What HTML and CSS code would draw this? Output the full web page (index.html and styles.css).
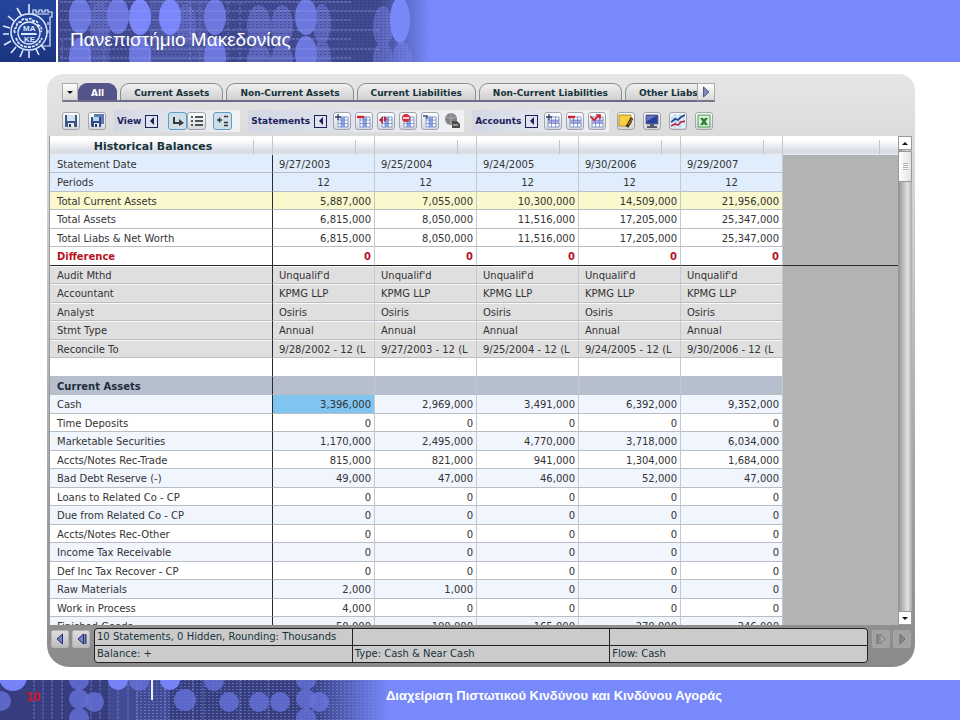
FILE: index.html
```html
<!DOCTYPE html>
<html lang="el">
<head>
    <meta charset="UTF-8">
    <meta name="viewport" content="width=device-width, initial-scale=1.0">
    <title>Πανεπιστήμιο Μακεδονίας</title>
    <link rel="stylesheet" href="styles.css">
</head>
<body>
    <!-- Shared icon shapes -->
    <svg class="sprite" width="0" height="0" aria-hidden="true">
        <symbol id="disk" viewBox="0 0 14 14">
            <path d="M1 1h12v12H2L1 12z" fill="#3c5488"/>
            <path d="M3 1h8v6H3z" fill="#cfe2f2"/>
            <path d="M4 9h6v4H4z" fill="#e8eef4"/>
            <path d="M5 10h2v3H5z" fill="#26385f"/>
        </symbol>
        <symbol id="disks" viewBox="0 0 14 14">
            <path d="M4 0h10v10H4z" fill="#5f7db4"/>
            <path d="M1 3h10v10H2L1 12z" fill="#304a80"/>
            <path d="M3 3h6v4H3z" fill="#b9d4ec"/>
            <path d="M4 9h5v4H4z" fill="#e8eef4"/>
            <path d="M5 10h2v3H5z" fill="#26385f"/>
        </symbol>
        <symbol id="grid" viewBox="0 0 14 14">
            <path d="M3 3h10v10H3z" fill="#fff" stroke="#8398cc"/>
            <path d="M6 3h3v10H6z" fill="#86a6ea"/>
            <path d="M3 6h10M3 9.500h10M6 3v10M9.500 3v10" stroke="#6f86c4" stroke-width=".8"/>
        </symbol>
        <symbol id="rows" viewBox="0 0 14 14">
            <path d="M2 3h11v10H2z" fill="#fff" stroke="#8398cc"/>
            <path d="M2 6h11v3H2z" fill="#a9a4e2"/>
            <path d="M2 6h11M2 9.500h11M5.500 3v10M9.500 3v10" stroke="#6f86c4" stroke-width=".8"/>
        </symbol>
        <symbol id="left" viewBox="0 0 14 14">
            <path d="M9.500 2v10L4 7z" fill="#7482c8" stroke="#262c66"/>
        </symbol>
        <symbol id="right" viewBox="0 0 14 14">
            <path d="M4.500 2v10L10 7z" fill="currentColor" stroke="#555a78"/>
        </symbol>
    </svg>

    <header class="banner">
        <svg class="banner-art" width="440" height="62" aria-hidden="true">
            <defs>
                <linearGradient id="fade-top">
                    <stop offset="0" stop-color="#788afb" stop-opacity="0"/>
                    <stop offset="1" stop-color="#788afb"/>
                </linearGradient>
                <pattern id="mesh" width="4" height="3" patternUnits="userSpaceOnUse">
                    <path d="M0 0h2v1H0z" fill="#2b3268" fill-opacity=".45"/>
                </pattern>
            </defs>
            <rect width="440" height="62" fill="#414a91"/>
            <g fill="#5e67bd">
                <rect x="90" width="20" height="62" opacity=".6"/>
                <rect x="150" width="58" height="62" opacity=".5"/>
                <ellipse cx="100" cy="22" rx="10" ry="20"/>
                <ellipse cx="186" cy="24" rx="10" ry="20"/>
                <ellipse cx="259" cy="26" rx="12" ry="21"/>
                <ellipse cx="282" cy="26" rx="11" ry="21"/>
                <ellipse cx="259" cy="60" rx="12" ry="16"/>
                <ellipse cx="282" cy="60" rx="11" ry="16"/>
                <ellipse cx="322" cy="24" rx="9" ry="20"/>
                <ellipse cx="322" cy="58" rx="9" ry="18"/>
                <ellipse cx="383" cy="27" rx="10" ry="21"/>
                <ellipse cx="383" cy="60" rx="10" ry="18"/>
                <ellipse cx="402" cy="60" rx="10" ry="18"/>
            </g>
            <rect x="58" width="382" height="62" fill="url(#mesh)"/>
            <g fill="#6d78de">
                <ellipse cx="80" cy="16" rx="11" ry="18"/>
                <ellipse cx="80" cy="58" rx="11" ry="20"/>
                <ellipse cx="118" cy="16" rx="11" ry="18"/>
                <ellipse cx="140" cy="56" rx="11" ry="20"/>
                <ellipse cx="215" cy="17" rx="11" ry="18"/>
                <ellipse cx="215" cy="58" rx="11" ry="20"/>
                <ellipse cx="306" cy="17" rx="11" ry="18"/>
                <ellipse cx="306" cy="54" rx="11" ry="18"/>
            </g>
            <g fill="#7b86fa">
                <ellipse cx="140" cy="17" rx="11" ry="18"/>
                <ellipse cx="170" cy="17" rx="11" ry="18"/>
            </g>
            <path d="M60 2h292M60 11h320M60 20h292M60 30h320M60 39h292M60 49h320M60 58h292" stroke="#98a2ee" stroke-opacity=".65" stroke-dasharray="3 1"/>
            <path d="M62 40v22M90 40v22M104 40v22M150 40v22M190 2v60M200 2v60M228 2v60M240 2v60" stroke="#98a2ee" stroke-opacity=".5" stroke-dasharray="3 2"/>
            <rect x="380" width="50" height="62" fill="url(#fade-top)"/>
            <rect x="429" width="11" height="62" fill="#788afb"/>
            <ellipse cx="400" cy="20" rx="10" ry="23" fill="#7888f8"/>
        </svg>
        <div class="crest">
            <svg width="56" height="62" viewBox="0 0 56 62" fill="none" stroke="#dfe9fb" role="img" aria-label="ΜΑΚΕ">
                <path d="M33 16v-6h3v2h3v-2h3v2h3v-2h3v2h4v5h-2v29h-8M33 14h16M48 22v3M48 30v3" stroke-width="1.200"/>
                <path d="M29 14V4M21 15l-4-7M14 21l-6-5M10 28l-7-2M9 34H3M11 41l-7 4M16 47l-5 6M23 50l-3 7M29 51v7M36 49l3 6M41 45l4 5" stroke-width="1.600"/>
                <circle cx="29" cy="32" r="18" fill="#24439b" stroke-width="1.500"/>
                <circle cx="29" cy="33" r="11" stroke-width="1.300"/>
                <path d="M15 33q-2-4 2-6q-1-5 4-5q2-5 6-2q4-3 6 1q5-1 5 4q5 2 3 7M16 38q3 9 12 9q10 0 14-9" stroke-width="1.800" stroke-dasharray="3 1"/>
                <path d="M21 33h15l1 2H21z" fill="#dfe9fb" stroke="none"/>
                <text x="23" y="31" class="crest-text">ΜΑ</text>
                <text x="24" y="42" class="crest-text">ΚΕ</text>
            </svg>
        </div>
        <h1 class="banner-title">Πανεπιστήμιο Μακεδονίας</h1>
    </header>

    <main class="panel">
        <nav class="tab-strip">
            <button class="strip-btn" aria-label="Tab list"><span class="caret-down"></span></button>
            <div class="tabs">
                <button class="tab tab-active">All</button>
                <button class="tab">Current Assets</button>
                <button class="tab">Non-Current Assets</button>
                <button class="tab">Current Liabilities</button>
                <button class="tab">Non-Current Liabilities</button>
                <button class="tab">Other Liabs</button>
            </div>
            <button class="strip-btn strip-next" aria-label="Next tabs"><svg width="14" height="14"><use href="#right"/></svg></button>
        </nav>

        <div class="toolbar">
            <button class="tool" aria-label="Save"><svg width="14" height="14"><use href="#disk"/></svg></button>
            <button class="tool" aria-label="Save all"><svg width="14" height="14"><use href="#disks"/></svg></button>
            <div class="group group-view">
                <span class="group-name">View</span>
                <button class="fold" aria-label="Collapse view"><span class="caret-left"></span></button>
                <div class="toggles">
                    <button class="tool tool-on" aria-label="Tree"><svg width="14" height="14"><path d="M3 3v6h6" fill="none" stroke="#3a3a3a" stroke-width="2"/><path d="M8 5l5 4-5 3z" fill="#3a3a3a"/></svg></button>
                    <button class="tool" aria-label="List"><svg width="14" height="14"><path d="M1 3h2M1 7h2M1 11h2M5 3h8M5 7h8M5 11h8" stroke="#222" stroke-width="1.600"/></svg></button>
                </div>
                <button class="tool tool-on" aria-label="Expand rows"><svg width="14" height="14"><path d="M1 6h5M3.500 3.500v5M8 2.500h4M8 8.500h4M8 11.500h4" stroke="#333" stroke-width="1.400"/></svg></button>
            </div>
            <div class="group group-wide">
                <span class="group-name">Statements</span>
                <button class="fold" aria-label="Collapse statements"><span class="caret-left"></span></button>
                <button class="tool" aria-label="Add statement"><svg width="14" height="14"><use href="#grid"/><path d="M0 3h6M3 0v6" stroke="#333f66" stroke-width="1.300"/></svg></button>
                <button class="tool" aria-label="Remove statement"><svg width="14" height="14"><use href="#grid"/><path d="M0 3h7" stroke="#d3202c" stroke-width="2.400"/></svg></button>
                <button class="tool" aria-label="Move statement"><svg width="14" height="14"><use href="#grid"/><path d="M0 6l4-4v8zM5 2l3 3-3 3z" fill="#c4203a"/></svg></button>
                <button class="tool" aria-label="Hide statement"><svg width="14" height="14"><use href="#grid"/><circle cx="5" cy="4" r="4" fill="#d8303a"/><path d="M2 4h6" stroke="#fff" stroke-width="1.600"/></svg></button>
                <button class="tool" aria-label="Statement list"><svg width="14" height="14"><use href="#grid"/><path d="M0 2h4v3" fill="none" stroke="#334a80" stroke-width="1.300"/></svg></button>
                <button class="tool tool-off" aria-label="Publish"><svg width="16" height="16"><circle cx="7" cy="6" r="6" fill="#858585"/><path d="M2 4q5 3 10 0M7 0v12" stroke="#aaa" fill="none"/><path d="M8 8h5l3 3v4H8z" fill="#4c4c4c"/><path d="M9 12h5" stroke="#ddd"/></svg></button>
            </div>
            <div class="group group-wide">
                <span class="group-name">Accounts</span>
                <button class="fold" aria-label="Collapse accounts"><span class="caret-left"></span></button>
                <button class="tool" aria-label="Add account"><svg width="14" height="14"><use href="#rows"/><path d="M0 3h6M3 0v6" stroke="#333f66" stroke-width="1.300"/></svg></button>
                <button class="tool" aria-label="Remove account"><svg width="14" height="14"><use href="#rows"/><path d="M0 3h7" stroke="#d3202c" stroke-width="2.400"/></svg></button>
                <button class="tool" aria-label="Check account"><svg width="14" height="14"><use href="#rows"/><path d="M0 2l4 4 6-5M6 1h4v4" fill="none" stroke="#cc2030" stroke-width="1.700"/></svg></button>
            </div>
            <button class="tool" aria-label="Notes"><svg width="16" height="14"><path d="M1 1h12v9l-3 2H1z" fill="#f8cf42" stroke="#b98d20"/><path d="M14 4l-5 9" stroke="#3b2c12" stroke-width="3"/><path d="M14 5l-4 6" stroke="#d78b24"/></svg></button>
            <button class="tool" aria-label="Screen"><svg width="14" height="14"><path d="M1 1h12v9H1z" fill="#2c3f9c" stroke="#6a6f86"/><path d="M2 2h9L2 7z" fill="#6277cc"/><path d="M5 10h4v2h3v2H2v-2h3z" fill="#5a5d6d"/></svg></button>
            <button class="tool" aria-label="Charts"><svg width="14" height="14"><path d="M0 0h14v14H0z" fill="#e0effa"/><path d="M0 4h14M0 8h14M4 0v14M9 0v14" stroke="#a8cbe4"/><path d="M0 8l4-3 3 1 3-3 4-2" fill="none" stroke="#21438a" stroke-width="1.700"/><path d="M0 12l4-2 3 1 3-3 4-1" fill="none" stroke="#c32a44" stroke-width="1.700"/></svg></button>
            <button class="tool" aria-label="Export to Excel"><svg width="14" height="14"><path d="M1 1h12v12H1z" fill="#d8efd5" stroke="#4a9a4e"/><path d="M3 4h3l5 7H8zM8 4h3l-5 7H3z" fill="#2f7c3c"/></svg></button>
        </div>

        <div class="sheet">
            <div class="sheet-view">
                <table class="balances">
                    <colgroup>
                        <col class="col-name"><col class="col-year"><col class="col-year"><col class="col-year"><col class="col-year"><col class="col-year"><col>
                    </colgroup>
                    <thead>
                        <tr><th>Historical Balances</th><th></th><th></th><th></th><th></th><th></th><th></th></tr>
                    </thead>
                    <tbody>
                        <tr class="blue left"><th>Statement Date</th><td>9/27/2003</td><td>9/25/2004</td><td>9/24/2005</td><td>9/30/2006</td><td>9/29/2007</td><td></td></tr>
                        <tr class="blue center"><th>Periods</th><td>12</td><td>12</td><td>12</td><td>12</td><td>12</td><td></td></tr>
                        <tr class="yellow"><th>Total Current Assets</th><td>5,887,000</td><td>7,055,000</td><td>10,300,000</td><td>14,509,000</td><td>21,956,000</td><td></td></tr>
                        <tr><th>Total Assets</th><td>6,815,000</td><td>8,050,000</td><td>11,516,000</td><td>17,205,000</td><td>25,347,000</td><td></td></tr>
                        <tr><th>Total Liabs &amp; Net Worth</th><td>6,815,000</td><td>8,050,000</td><td>11,516,000</td><td>17,205,000</td><td>25,347,000</td><td></td></tr>
                        <tr class="difference"><th>Difference</th><td>0</td><td>0</td><td>0</td><td>0</td><td>0</td><td></td></tr>
                        <tr class="gray left"><th>Audit Mthd</th><td>Unqualif'd</td><td>Unqualif'd</td><td>Unqualif'd</td><td>Unqualif'd</td><td>Unqualif'd</td><td></td></tr>
                        <tr class="gray left"><th>Accountant</th><td>KPMG LLP</td><td>KPMG LLP</td><td>KPMG LLP</td><td>KPMG LLP</td><td>KPMG LLP</td><td></td></tr>
                        <tr class="gray left"><th>Analyst</th><td>Osiris</td><td>Osiris</td><td>Osiris</td><td>Osiris</td><td>Osiris</td><td></td></tr>
                        <tr class="gray left"><th>Stmt Type</th><td>Annual</td><td>Annual</td><td>Annual</td><td>Annual</td><td>Annual</td><td></td></tr>
                        <tr class="gray left"><th>Reconcile To</th><td>9/28/2002 - 12 (L</td><td>9/27/2003 - 12 (L</td><td>9/25/2004 - 12 (L</td><td>9/24/2005 - 12 (L</td><td>9/30/2006 - 12 (L</td><td></td></tr>
                        <tr><th></th><td></td><td></td><td></td><td></td><td></td><td></td></tr>
                        <tr class="section"><th>Current Assets</th><td></td><td></td><td></td><td></td><td></td><td></td></tr>
                        <tr class="pale"><th>Cash</th><td class="selected">3,396,000</td><td>2,969,000</td><td>3,491,000</td><td>6,392,000</td><td>9,352,000</td><td></td></tr>
                        <tr><th>Time Deposits</th><td>0</td><td>0</td><td>0</td><td>0</td><td>0</td><td></td></tr>
                        <tr class="pale"><th>Marketable Securities</th><td>1,170,000</td><td>2,495,000</td><td>4,770,000</td><td>3,718,000</td><td>6,034,000</td><td></td></tr>
                        <tr><th>Accts/Notes Rec-Trade</th><td>815,000</td><td>821,000</td><td>941,000</td><td>1,304,000</td><td>1,684,000</td><td></td></tr>
                        <tr class="pale"><th>Bad Debt Reserve (-)</th><td>49,000</td><td>47,000</td><td>46,000</td><td>52,000</td><td>47,000</td><td></td></tr>
                        <tr><th>Loans to Related Co - CP</th><td>0</td><td>0</td><td>0</td><td>0</td><td>0</td><td></td></tr>
                        <tr class="pale"><th>Due from Related Co - CP</th><td>0</td><td>0</td><td>0</td><td>0</td><td>0</td><td></td></tr>
                        <tr><th>Accts/Notes Rec-Other</th><td>0</td><td>0</td><td>0</td><td>0</td><td>0</td><td></td></tr>
                        <tr class="pale"><th>Income Tax Receivable</th><td>0</td><td>0</td><td>0</td><td>0</td><td>0</td><td></td></tr>
                        <tr><th>Def Inc Tax Recover - CP</th><td>0</td><td>0</td><td>0</td><td>0</td><td>0</td><td></td></tr>
                        <tr class="pale"><th>Raw Materials</th><td>2,000</td><td>1,000</td><td>0</td><td>0</td><td>0</td><td></td></tr>
                        <tr><th>Work in Process</th><td>4,000</td><td>0</td><td>0</td><td>0</td><td>0</td><td></td></tr>
                        <tr class="pale"><th>Finished Goods</th><td>50,000</td><td>100,000</td><td>165,000</td><td>270,000</td><td>346,000</td><td></td></tr>
                    </tbody>
                </table>
            </div>
            <div class="scrollbar">
                <button class="scroll-btn" aria-label="Scroll up"><span class="caret-up"></span></button>
                <div class="scroll-thumb"><span class="grip"></span></div>
                <button class="scroll-btn scroll-end" aria-label="Scroll down"><span class="caret-down"></span></button>
            </div>
        </div>

        <div class="status">
            <div class="pager">
                <button class="page-btn" aria-label="Previous"><svg width="14" height="14"><use href="#left"/></svg></button>
                <button class="page-btn" aria-label="First"><svg width="14" height="14"><use href="#left"/><path d="M11.500 2v10" stroke="#3a4388" stroke-width="2"/></svg></button>
            </div>
            <div class="status-cells">
                <span>10 Statements, 0 Hidden, Rounding: Thousands</span><span></span><span></span>
                <span>Balance: +</span><span>Type: Cash &amp; Near Cash</span><span>Flow: Cash</span>
            </div>
            <div class="pager">
                <button class="page-btn page-off" aria-label="Last"><svg width="14" height="14"><path d="M3.500 2v10" stroke="#777" stroke-width="2"/><path d="M6 2v10l5-5z" fill="#aaa" stroke="#777"/></svg></button>
                <button class="page-btn page-off" aria-label="Next"><svg width="14" height="14"><path d="M5 2v10l5-5z" fill="#888" stroke="#6b6b6b"/></svg></button>
            </div>
        </div>
    </main>

    <footer class="footer">
        <svg class="banner-art" width="400" height="40" aria-hidden="true">
            <defs>
                <linearGradient id="fade-bottom">
                    <stop offset="0" stop-color="#788afb" stop-opacity="0"/>
                    <stop offset="1" stop-color="#788afb"/>
                </linearGradient>
                <pattern id="weave" width="4" height="3" patternUnits="userSpaceOnUse">
                    <path d="M0 0h2v1H0z" fill="#a3aaf0" fill-opacity=".4"/>
                </pattern>
            </defs>
            <rect width="400" height="40" fill="#363e80"/>
            <rect x="110" width="60" height="40" fill="#4a53a4" opacity=".6"/>
            <rect x="135" width="265" height="40" fill="url(#weave)"/>
            <path d="M34 0v40M43 0v40M52 0v40M62 0v40M91 0v40M100 0v40M109 0v40M118 0v40M128 0v40M137 0v40M165 0v40M193 0v40M203 0v40M240 0v40M268 0v40" stroke="#8b95e4" stroke-opacity=".55" stroke-dasharray="3 1"/>
            <g fill="#6772d8" fill-opacity=".8">
                <circle cx="1" cy="21" r="10"/>
                <circle cx="79" cy="0" r="10"/>
                <circle cx="79" cy="19" r="10"/>
                <circle cx="79" cy="38" r="10"/>
                <circle cx="94" cy="22" r="10"/>
                <circle cx="139" cy="1" r="10"/>
                <circle cx="185" cy="20" r="11"/>
                <circle cx="214" cy="1" r="10"/>
                <circle cx="229" cy="22" r="10"/>
                <circle cx="259" cy="22" r="10"/>
                <circle cx="280" cy="22" r="10"/>
                <circle cx="306" cy="0" r="10"/>
                <circle cx="306" cy="19" r="10"/>
                <circle cx="306" cy="38" r="10"/>
                <circle cx="319" cy="22" r="10"/>
            </g>
            <g fill="#7683f7">
                <circle cx="13" cy="-3" r="14"/>
                <circle cx="118" cy="0" r="10"/>
                <circle cx="170" cy="0" r="10"/>
            </g>
            <rect x="310" width="80" height="40" fill="url(#fade-bottom)"/>
            <rect x="389" width="11" height="40" fill="#788afb"/>
            <rect x="151" width="2" height="20" fill="#e8ebff"/>
        </svg>
        <span class="page-number">10</span>
        <span class="footer-title">Διαχείριση Πιστωτικού Κινδύνου και Κινδύνου Αγοράς</span>
    </footer>
</body>
</html>
```
FILE: styles.css
```css
* {
    box-sizing: border-box;
}

body {
    margin: 0;
    height: 100vh;
    display: flex;
    flex-direction: column;
    background: #fff;
    color: #333;
    font-family: Verdana, "DejaVu Sans", sans-serif;
    font-size: 10px;
}

button {
    margin: 0;
    padding: 0;
    border: none;
    font: inherit;
    color: inherit;
    cursor: pointer;
}

svg {
    display: block;
    flex: none;
}

.sprite {
    position: absolute;
}

/* Banner */
.banner,
.footer {
    position: relative;
    flex: none;
    display: flex;
    align-items: center;
    background: #788afb;
    color: #fff;
    font-family: Arial, "Liberation Sans", sans-serif;
}

.banner {
    height: 62px;
}

.banner-art {
    position: absolute;
    left: 0;
    top: 0;
}

.crest {
    position: relative;
    border-right: 2px solid #fff;
    background: linear-gradient(#25459e, #1c3582);
}

.crest-text {
    fill: #dfe9fb;
    stroke: none;
    font-size: 8px;
    font-weight: bold;
}

.banner-title {
    position: relative;
    margin: 18px 0 0 12px;
    font-size: 19px;
    font-weight: normal;
    line-height: 24px;
}

/* Panel */
.panel {
    flex: 1;
    min-height: 0;
    margin: 12px 45px 13px 47px;
    padding: 9px 3px 0 2px;
    display: flex;
    flex-direction: column;
    border-radius: 16px 16px 22px 22px;
    background: linear-gradient(#e6e6e6 0, #dcdcdc 60px, #b4b4b4 300px, #8a8a8a 100%);
}

/* Tabs */
.tab-strip {
    flex: none;
    display: flex;
    max-width: 666px;
    height: 19px;
    padding: 0 0 0 13px;
    color: #17333a;
    font-size: 9px;
    font-weight: bold;
}

.tabs {
    flex: 1;
    min-width: 0;
    display: flex;
    gap: 3px;
    overflow: hidden;
    border-bottom: 2px solid #6a6a8c;
}

.tab {
    flex: none;
    padding: 2px 13px 0;
    border: 1px solid #8c8c8c;
    border-bottom: none;
    border-radius: 9px 9px 0 0;
    background: linear-gradient(#f0f0f0, #cfcfcf);
}

.tab-active {
    padding: 2px 12px 0;
    border-color: #54548a;
    background: #54548a;
    color: #fff;
}

.strip-btn {
    flex: none;
    width: 16px;
    display: flex;
    align-items: center;
    justify-content: center;
    border: 1px solid #aaa;
    border-bottom: 2px solid #77778c;
    background: linear-gradient(#fff, #d8d8d8);
}

.strip-next {
    width: 18px;
    color: #8188bb;
}

.caret-down,
.caret-up {
    border: 3px solid transparent;
}

.caret-down {
    border-top-color: #111;
    border-bottom: none;
}

.caret-up {
    border-bottom-color: #111;
    border-top: none;
}

.caret-left {
    border: 4px solid transparent;
    border-right-color: #20205c;
    border-left: none;
}

/* Toolbar */
.toolbar {
    flex: none;
    display: flex;
    align-items: center;
    gap: 8px;
    margin: 8px 0 4px;
    padding-left: 13px;
}

.group {
    display: flex;
    align-items: center;
    gap: 4px;
    height: 22px;
    padding: 0 3px;
    background: linear-gradient(90deg, #d2d7e4, #f1f2f5);
}

.group-view {
    gap: 7px;
    padding-right: 8px;
}

.group-view .group-name {
    margin-right: -3px;
}

.group-wide .fold {
    margin-right: 2px;
}

.group-name {
    color: #20205c;
    font-size: 9px;
    font-weight: bold;
}

.fold {
    width: 13px;
    height: 13px;
    display: flex;
    align-items: center;
    justify-content: center;
    border: 1px solid #20205c;
    background: #dfe3f0;
}

.toggles {
    display: flex;
    margin-left: 3px;
}

.tool {
    width: 18px;
    height: 18px;
    display: flex;
    align-items: center;
    justify-content: center;
    border: 1px solid #a0a4ac;
    border-radius: 3px;
    background: linear-gradient(#fff, #d4d8de);
}

.group-view .tool {
    width: 19px;
}

.tool-on {
    border-color: #5f9cc4;
    background: #cfdfe9;
}

.tool-off {
    border-color: transparent;
    background: none;
}

/* Sheet */
.sheet {
    flex: 1;
    min-height: 0;
    display: flex;
}

.sheet-view {
    flex: 1;
    min-width: 0;
    overflow: hidden;
    border-left: 1px solid #999;
    background: #b2b3b3;
}

.balances {
    width: 100%;
    table-layout: fixed;
    border-collapse: separate;
    border-spacing: 0;
}

.col-name {
    width: 223px;
}

.col-year {
    width: 102px;
}

.balances th,
.balances td {
    height: 18px;
    padding: 2px 3px 0;
    border-right: 1px solid #c6c8cc;
    border-bottom: 1px solid #b9bdc4;
    background: #fff;
    line-height: 14px;
    text-align: right;
    white-space: nowrap;
    overflow: hidden;
}

.balances tbody tr:nth-child(even) th,
.balances tbody tr:nth-child(even) td {
    height: 19px;
}

.balances thead th {
    height: 19px;
    border-bottom: none;
    background: linear-gradient(#fff 20%, #d6dae3 85%, #e8eaef);
    color: #17333a;
    font-size: 11px;
    text-align: center;
}

.balances thead th::after {
    content: "";
    float: right;
    width: 1px;
    height: 14px;
    margin-right: 15px;
    background: #c0c4cc;
}

.balances thead th:last-child {
    border-right: none;
}

.balances tbody th {
    padding-left: 7px;
    border-right-color: #2a2a2a;
    font-weight: normal;
    text-align: left;
}

.balances tbody td:last-child {
    border-right: none;
    border-bottom: none;
    background: #b2b3b3;
}

.balances .left td {
    padding: 2px 0 0 6px;
    text-align: left;
}

.balances .center td {
    text-align: center;
}

.balances .blue th,
.balances .blue td:not(:last-child) {
    background: #e0edfc;
}

.balances .yellow th,
.balances .yellow td:not(:last-child) {
    background: #faf8cd;
}

.balances .pale th,
.balances .pale td:not(:last-child) {
    background: #f0f5fe;
}

.balances .gray th,
.balances .gray td:not(:last-child) {
    background: #dfdfdf;
    box-shadow: inset 0 1px #f8f8f8;
}

.balances .section th,
.balances .section td:not(:last-child) {
    background: #b5bfce;
    color: #222c38;
    font-weight: bold;
}

.balances .difference th,
.balances .difference td {
    border-bottom: 1px solid #2a2a2a;
    color: #b8121c;
    font-weight: bold;
}

.balances .difference td:last-child {
    border-bottom: 1px solid #2a2a2a;
}

.balances td.selected:not(:last-child) {
    background: #80c5f0;
}

/* Scrollbar */
.scrollbar {
    flex: none;
    width: 14px;
    display: flex;
    flex-direction: column;
    background: linear-gradient(90deg, #8f8f8f, #e4e4e4 70%, #a8a8a8);
}

.scroll-btn {
    height: 14px;
    display: flex;
    align-items: center;
    justify-content: center;
    border: 1px solid #999;
    background: #fff;
}

.scroll-end {
    margin-top: auto;
}

.scroll-thumb {
    height: 31px;
    margin-top: 1px;
    display: flex;
    align-items: center;
    justify-content: center;
    border: 1px solid #999;
    border-radius: 2px;
    background: linear-gradient(90deg, #fff, #e2e2e2);
}

.grip {
    width: 5px;
    height: 8px;
    background: repeating-linear-gradient(#aaa 0, #aaa 1px, #fff 1px, #fff 2px);
}

/* Status bar */
.status {
    flex: none;
    display: flex;
    align-items: flex-start;
    gap: 4px;
    padding: 3px 1px 4px 2px;
}

.pager {
    display: flex;
    gap: 3px;
    padding-top: 2px;
}

.page-btn {
    width: 18px;
    height: 18px;
    display: flex;
    align-items: center;
    justify-content: center;
    border: 1px solid #b5b5b5;
    border-radius: 2px;
    background: linear-gradient(#dedede, #bcbcbc);
}

.page-off {
    border-color: #a6a6a6;
    background: #a2a2a2;
}

.status-cells {
    flex: 1;
    display: grid;
    grid-template-columns: repeat(3, 1fr);
    gap: 1px;
    overflow: hidden;
    border: 1px solid #222;
    border-radius: 4px;
    background: #222;
    color: #17333a;
}

.status-cells span {
    height: 16px;
    padding-left: 2px;
    background: #cbcbcb;
    line-height: 16px;
    white-space: nowrap;
}

/* Footer */
.footer {
    height: 40px;
    font-size: 13px;
    font-weight: bold;
    line-height: 16px;
}

.page-number {
    position: relative;
    width: 360px;
    padding: 0 0 6px 26px;
    color: #d8141f;
}

.footer-title {
    position: relative;
    margin: 0 0 8px 26px;
}
```
